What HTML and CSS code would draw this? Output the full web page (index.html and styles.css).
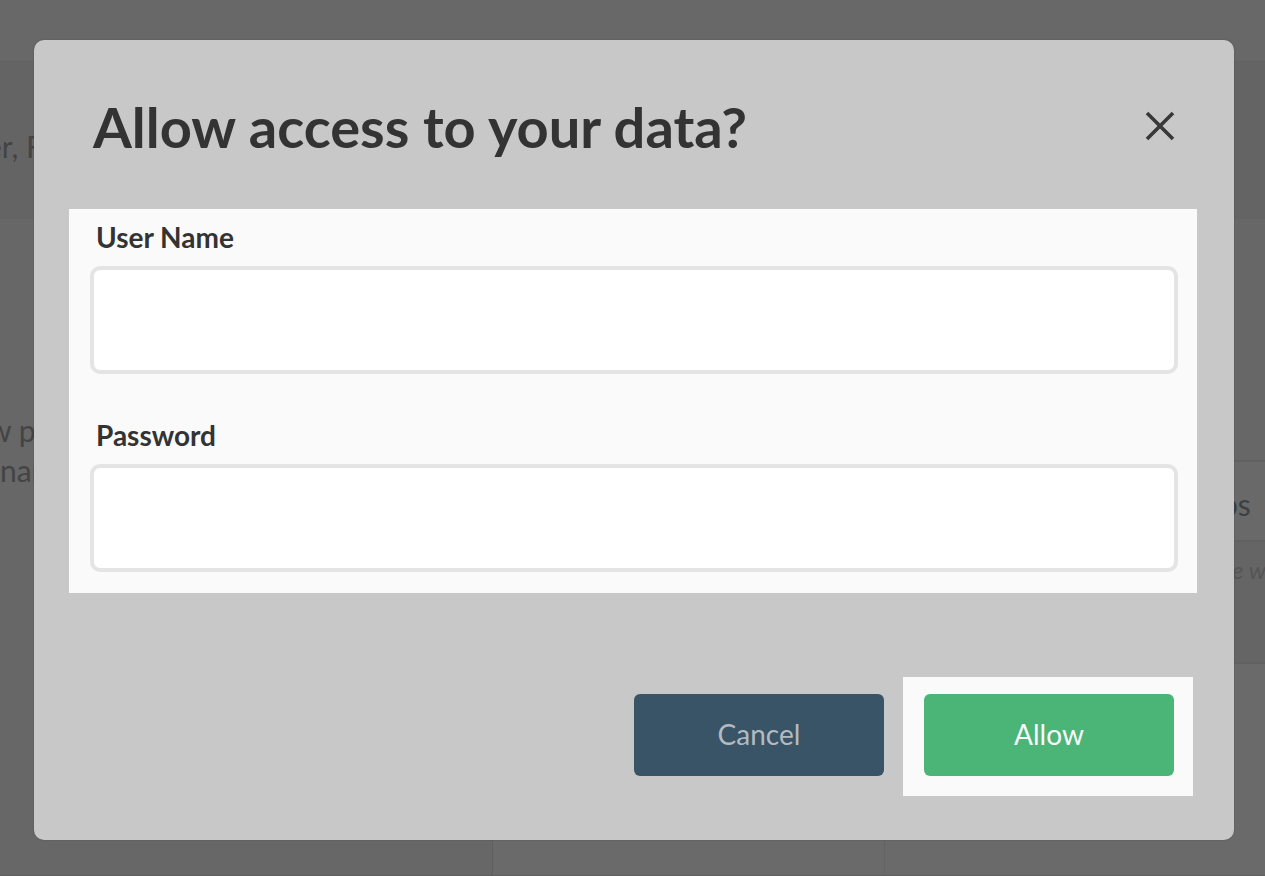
FILE: index.html
```html
<!DOCTYPE html>
<html lang="en">
<head>
<meta charset="utf-8">
<title>Allow access to your data?</title>
<link rel="stylesheet" href="styles.css">
</head>
<body>
<div class="page" aria-hidden="true">
  <div class="page-top"></div>
  <div class="page-band">er, F</div>
  <div class="page-main">
    <div class="page-copy">w p<br>nar</div>
    <div class="page-side">
      <div class="side-blank"></div>
      <div class="side-row">ps</div>
      <div class="side-note">e w</div>
    </div>
  </div>
  <div class="page-columns">
    <div class="column column-first"></div>
    <div class="column column-second"></div>
    <div class="column"></div>
  </div>
</div>
<div class="overlay">
  <form class="modal" role="dialog" aria-labelledby="modal-title">
    <header class="modal-header">
      <h1 class="modal-title" id="modal-title">Allow access to your data?</h1>
      <button class="close" type="button" aria-label="Close">
        <svg width="30" height="30" viewBox="0 0 30 30" fill="none" stroke="#383838" stroke-width="3.6"><path d="M2 2L28 28M28 2L2 28"/></svg>
      </button>
    </header>
    <div class="fields">
      <div class="field">
        <label class="label" for="user-name">User Name</label>
        <input class="input" id="user-name" type="text">
      </div>
      <div class="field">
        <label class="label" for="password">Password</label>
        <input class="input" id="password" type="password">
      </div>
    </div>
    <footer class="actions">
      <button class="button cancel" type="button">Cancel</button>
      <div class="highlight"><button class="button allow" type="submit">Allow</button></div>
    </footer>
  </form>
</div>
</body>
</html>
```
FILE: styles.css
```css
* { box-sizing: border-box; }
body {
  margin: 0;
  font-family: Lato, "Liberation Sans", sans-serif;
  background: #676767;
  overflow: hidden;
}
.page {
  display: flex;
  flex-direction: column;
  height: 100vh;
  overflow: hidden;
  font-size: 30px;
  line-height: 40px;
  color: #444;
  border-bottom: 1px solid #5f5f5f;
}
.page-top { height: 61px; background: #686868; }
.page-band {
  height: 158px;
  padding-top: 64px;
  text-indent: -14px;
  background: #646464;
  border-top: 1px solid #616161;
}
.page-main { display: flex; justify-content: space-between; height: 445px; }
.page-copy { padding-top: 191px; text-indent: -12px; }
.page-side { width: 36px; display: flex; flex-direction: column; }
.side-blank { height: 241px; }
.side-row {
  height: 80px;
  padding-top: 22px;
  text-indent: -8px;
  color: #3d4043;
  background: #696969;
  border-top: 2px solid #616161;
}
.side-note {
  height: 124px;
  padding-top: 8px;
  font-size: 24px;
  font-style: italic;
  text-indent: 3px;
  white-space: nowrap;
  color: #555;
  background: #656565;
  border-top: 2px solid #616161;
  border-bottom: 2px solid #616161;
}
.page-columns { flex: 1; display: grid; grid-template-columns: 39% 31% 30%; }
.column { background: #6a6a6a; }
.column-first { background: #676767; border-right: 1px solid #5f5f5f; }
.column-second { border-right: 1px solid #636363; }
.overlay {
  position: absolute;
  inset: 0;
  padding: 40px 31px 36px 34px;
}
.modal {
  padding: 53px 37px 44px 35px;
  background: #c8c8c8;
  border-radius: 10px;
  box-shadow: 0 0 2px rgba(0, 0, 0, 0.2);
}
.modal-header {
  display: flex;
  align-items: flex-start;
  justify-content: space-between;
  padding: 0 22px 0 24px;
  margin-bottom: 48px;
}
.modal-title {
  margin: 0;
  font-size: 56px;
  line-height: 68px;
  font-weight: 700;
  color: #333;
}
.close {
  display: flex;
  padding: 0;
  margin-top: 18px;
  border: 0;
  background: none;
}
.fields {
  display: flex;
  flex-direction: column;
  gap: 44px;
  padding: 11px 19px 21px 21px;
  background: #fafafa;
}
.field { display: flex; flex-direction: column; gap: 12px; }
.label {
  padding-left: 6px;
  font-size: 28px;
  line-height: 34px;
  font-weight: 700;
  color: #333;
}
.input {
  width: 100%;
  height: 108px;
  padding: 0 24px;
  font: inherit;
  font-size: 28px;
  background: #fff;
  border: 4px solid #e4e4e4;
  border-radius: 10px;
}
.actions {
  display: flex;
  justify-content: flex-end;
  gap: 19px;
  padding-right: 4px;
  margin-top: 84px;
}
.button {
  display: block;
  width: 250px;
  height: 82px;
  padding: 0 0 2px;
  border: 0;
  border-radius: 6px;
  font-family: inherit;
  font-size: 28px;
  line-height: 34px;
}
.cancel { margin-top: 17px; background: #385466; color: #b4bbc0; }
.highlight { padding: 17px 19px 20px 21px; background: #fafafa; }
.allow { background: #4ab577; color: #fafafa; }
```
